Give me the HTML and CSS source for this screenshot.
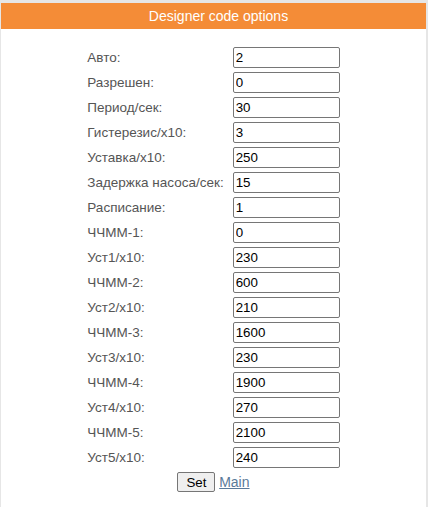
FILE: index.html
```html
<!DOCTYPE html>
<html>
<head>
<meta charset="utf-8">
<link rel="stylesheet" href="styles.css">
</head>
<body>
<div class="panel">
  <div class="header">Designer code options</div>
  <form class="form">
    <table class="grid">
      <tr><td>Авто:</td><td><input class="field" value="2"></td></tr>
      <tr><td>Разрешен:</td><td><input class="field" value="0"></td></tr>
      <tr><td>Период/сек:</td><td><input class="field" value="30"></td></tr>
      <tr><td>Гистерезис/х10:</td><td><input class="field" value="3"></td></tr>
      <tr><td>Уставка/х10:</td><td><input class="field" value="250"></td></tr>
      <tr><td>Задержка насоса/сек:</td><td><input class="field" value="15"></td></tr>
      <tr><td>Расписание:</td><td><input class="field" value="1"></td></tr>
      <tr><td>ЧЧММ-1:</td><td><input class="field" value="0"></td></tr>
      <tr><td>Уст1/х10:</td><td><input class="field" value="230"></td></tr>
      <tr><td>ЧЧММ-2:</td><td><input class="field" value="600"></td></tr>
      <tr><td>Уст2/х10:</td><td><input class="field" value="210"></td></tr>
      <tr><td>ЧЧММ-3:</td><td><input class="field" value="1600"></td></tr>
      <tr><td>Уст3/х10:</td><td><input class="field" value="230"></td></tr>
      <tr><td>ЧЧММ-4:</td><td><input class="field" value="1900"></td></tr>
      <tr><td>Уст4/х10:</td><td><input class="field" value="270"></td></tr>
      <tr><td>ЧЧММ-5:</td><td><input class="field" value="2100"></td></tr>
      <tr><td>Уст5/х10:</td><td><input class="field" value="240"></td></tr>
    </table>
    <div class="actions"><button type="button" class="btn">Set</button> <a class="link" href="#">Main</a></div>
  </form>
</div>
</body>
</html>
```
FILE: styles.css
```css
html, body { margin: 0; padding: 0; }
html { height: 100%; }
body {
  background: #e6e6e6;
  font-family: "Liberation Sans", Arial, sans-serif;
  padding: 3px 2px 0 1px;
  height: 100%;
  box-sizing: border-box;
  overflow: hidden;
}
.panel {
  background: #fff;
  height: 100%;
}
.header {
  background: #f48c37;
  color: #fff;
  font-size: 14px;
  height: 26px;
  line-height: 26px;
  text-align: center;
  padding-left: 10px;
}
.form { padding-top: 14px; }
.grid {
  margin: 0 auto;
  border-collapse: separate;
  border-spacing: 2px 4px;
  font-size: 13.5px;
  color: #555;
}
.grid td { padding: 0 1px; height: 21px; }
.grid td:first-child { padding-right: 6px; }
.field {
  width: 107px;
  height: 21px;
  box-sizing: border-box;
  border: 1px solid #767676;
  border-radius: 2px;
  padding: 1px 2px;
  font-family: "Liberation Sans", Arial, sans-serif;
  font-size: 13.33px;
  color: #000;
  margin: 0;
  display: block;
}
.actions {
  text-align: center;
  font-size: 13.33px;
}
.btn {
  font-family: "Liberation Sans", Arial, sans-serif;
  font-size: 13.33px;
  padding: 1px 8px;
  border: 1px solid #767676;
  border-radius: 2px;
  background: #efefef;
  color: #000;
  height: 20px;
}
.link { color: #5a7a9a; font-size: 14px; }
```
